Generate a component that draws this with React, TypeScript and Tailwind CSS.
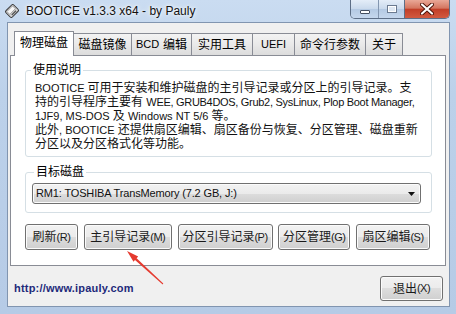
import React from "react";

const FONT = "font-['Liberation_Sans','Noto_Sans_CJK_SC',sans-serif]";

function Lat({ children }: { children: React.ReactNode }) {
  return <span className="text-[11px]">{children}</span>;
}

function WinButton({ label, mn, className = "" }: { label: string; mn: string; className?: string }) {
  return (
    <div
      className={`flex items-center justify-center rounded-[3px] border border-[#707070] bg-[linear-gradient(to_bottom,#f2f2f2_0%,#ebebeb_50%,#dddddd_50%,#cfcfcf_100%)] shadow-[inset_0_0_0_1px_#fbfbfb] text-[12px] leading-none text-[#1a1a1a] ${className}`}
    >
      <span>{label}</span>
      <span className="text-[11px] tracking-[-0.5px]">({mn})</span>
    </div>
  );
}

function DiskIcon() {
  return (
    <svg width="16" height="16" viewBox="0 0 16 16" className="ml-[4px] shrink-0">
      <g transform="rotate(-45 8 8)">
        <rect x="2.5" y="3.5" width="11" height="9" rx="1.5" fill="#d4d4d4" stroke="#333" />
        <rect x="4" y="4.8" width="8" height="4" fill="#f6f6f6" stroke="#777" strokeWidth="0.6" />
        <rect x="5" y="10" width="6" height="1.4" fill="#555" />
      </g>
    </svg>
  );
}

function CaptionButtons() {
  return (
    <div className="ml-auto mr-[6px] flex h-[19px] self-start overflow-hidden rounded-b-[5px] border border-t-0 border-[#5d6e86]">
      <div className="flex w-[28px] items-end justify-center border-r border-[#8396b0] bg-[linear-gradient(to_bottom,#e4edf8,#c9d9ec_50%,#b4c9e3_51%,#c5d7ed)] pb-[4px]">
        <div className="h-[4px] w-[10px] rounded-[1px] border border-[#444f60] bg-white" />
      </div>
      <div className="flex w-[26px] items-center justify-center border-r border-[#5d6e86] bg-[linear-gradient(to_bottom,#e4edf8,#c9d9ec_50%,#b4c9e3_51%,#c5d7ed)]">
        <div className="h-[8px] w-[10px] border border-[#6b7a90] bg-[#dfe8f3] shadow-[inset_0_0_0_1px_#fff]" />
      </div>
      <div className="flex w-[44px] items-center justify-center bg-[linear-gradient(to_bottom,#e9a897,#d47660_45%,#c23f28_52%,#d25a40)]">
        <svg width="14" height="12" viewBox="0 0 14 12">
          <path d="M2 1.5 L12 10.5 M12 1.5 L2 10.5" stroke="#4a1208" strokeWidth="4" strokeLinecap="round" />
          <path d="M2 1.5 L12 10.5 M12 1.5 L2 10.5" stroke="#fff" strokeWidth="2.2" strokeLinecap="round" />
        </svg>
      </div>
    </div>
  );
}

const tabs: { label: React.ReactNode; w: string }[] = [
  { label: "磁盘镜像", w: "w-[58px]" },
  { label: <><Lat>BCD</Lat><span className="ml-[4px]">编辑</span></>, w: "w-[60px]" },
  { label: "实用工具", w: "w-[61px]" },
  { label: <Lat>UEFI</Lat>, w: "w-[42px]" },
  { label: "命令行参数", w: "w-[71px]" },
  { label: "关于", w: "w-[37px]" },
];

export default function App() {
  return (
    <div
      className={`${FONT} relative h-[314px] w-[456px] overflow-hidden bg-[linear-gradient(to_bottom,#cadcf1,#bcd1ea_30%,#b6cbe6)] text-black`}
    >
      {/* title bar */}
      <div className="flex h-[22px] items-center">
        <DiskIcon />
        <span className="ml-[6px] text-[12px] leading-none text-[#111] [text-shadow:0_0_6px_#fff,0_0_3px_#fff]">
          BOOTICE v1.3.3 x64 - by Pauly
        </span>
        <CaptionButtons />
      </div>

      {/* client area */}
      <div className="ml-[7px] h-[285px] w-[443px] border border-[#8195b0] bg-[#f0f0f0]">
        <div className="ml-[2px] w-[436px]">
          {/* tab strip */}
          <div className="mt-[8px] flex h-[24px] items-end pl-[4px] text-[12px]">
            <div className="relative z-10 mb-[-1px] flex h-[25px] w-[60px] items-center justify-center border border-b-0 border-[#898c95] bg-white pb-[2px] leading-none">
              物理磁盘
            </div>
            {tabs.map((t, i) => (
              <div
                key={i}
                className={`flex h-[22px] ${t.w} items-center justify-center border-t border-r border-[#898c95] bg-[linear-gradient(to_bottom,#f3f3f3,#e9e9e9_50%,#dcdcdc)] leading-none`}
              >
                {t.label}
              </div>
            ))}
          </div>

          {/* tab page */}
          <div className="h-[211px] border border-[#898c95] bg-white">
            <fieldset className="ml-[14px] mt-[7px] w-[407px] rounded-[3px] border border-[#d5dfe5] px-[9px] pb-[5px] pt-[4px]">
              <legend className="ml-[-4px] px-[2px] text-[12px] leading-[14px]">使用说明</legend>
              <div className="whitespace-nowrap text-[12px] leading-[14px] text-[#111]">
                <div>
                  <Lat>BOOTICE </Lat>可用于安装和维护磁盘的主引导记录或分区上的引导记录。支
                </div>
                <div>
                  持的引导程序主要有 <span className="text-[11px] tracking-[-0.3px]">WEE, GRUB4DOS, Grub2, SysLinux, Plop Boot Manager,</span>
                </div>
                <div>
                  <Lat>1JF9, MS-DOS </Lat>及 <Lat>Windows NT 5/6 </Lat>等。
                </div>
                <div>
                  此外<Lat>, BOOTICE </Lat>还提供扇区编辑、扇区备份与恢复、分区管理、磁盘重新
                </div>
                <div>分区以及分区格式化等功能。</div>
              </div>
            </fieldset>

            <fieldset className="ml-[14px] mt-[8px] w-[407px] rounded-[3px] border border-[#d5dfe5] px-[6px] pb-[8px] pt-[4px]">
              <legend className="ml-[2px] px-[2px] text-[12px] leading-[14px]">目标磁盘</legend>
              <div className="flex h-[21px] w-[389px] items-center rounded-[3px] border border-[#707070] bg-[linear-gradient(to_bottom,#f2f2f2_0%,#ebebeb_50%,#dddddd_50%,#cfcfcf_100%)] pl-[3px] pr-[5px] shadow-[inset_0_0_0_1px_#fbfbfb]">
                <span className="text-[11px] leading-none tracking-[-0.15px] text-[#111]">
                  RM1: TOSHIBA TransMemory (7.2 GB, J:)
                </span>
                <svg width="7" height="4" viewBox="0 0 7 4" className="ml-auto">
                  <path d="M0 0 H7 L3.5 4 Z" fill="#111" />
                </svg>
              </div>
            </fieldset>

            <div className="ml-[14px] mt-[11px] flex h-[26px] w-[405px] justify-between">
              <WinButton label="刷新" mn="R" className="w-[53px]" />
              <WinButton label="主引导记录" mn="M" className="w-[88px]" />
              <WinButton label="分区引导记录" mn="P" className="w-[95px]" />
              <WinButton label="分区管理" mn="G" className="w-[72px]" />
              <WinButton label="扇区编辑" mn="S" className="w-[74px]" />
            </div>
          </div>
        </div>

        {/* bottom row */}
        <div className="mt-[10px] flex items-center pl-[6px] pr-[6px]">
          <span className="text-[11px] font-bold tracking-[0.2px] text-[#1e2a7a]">http://www.ipauly.com</span>
          <WinButton label="退出" mn="X" className="ml-auto h-[25px] w-[63px]" />
        </div>
      </div>

      {/* red annotation arrow */}
      <svg className="pointer-events-none absolute left-0 top-0" width="456" height="314">
        <polygon
          points="163.3,283.6 136.6,258.2 138.2,256.5 127,251 133.5,261.7 135,260 162.7,284.4"
          fill="#e53b30"
        />
      </svg>
    </div>
  );
}
